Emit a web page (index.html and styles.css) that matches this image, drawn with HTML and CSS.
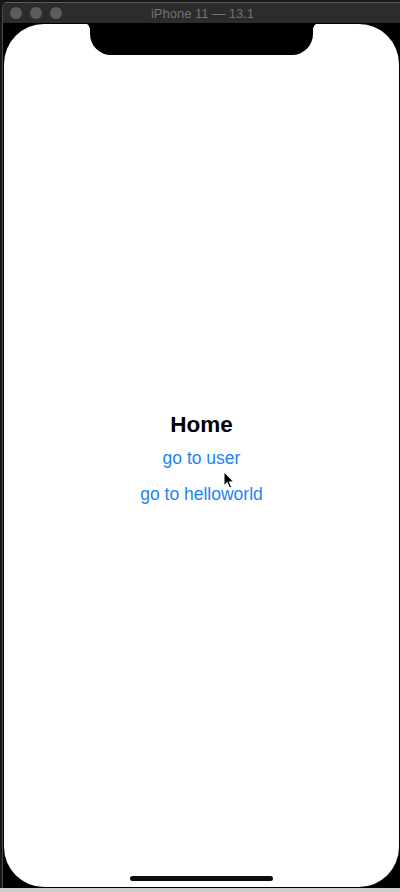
FILE: index.html
```html
<!DOCTYPE html>
<html>
<head>
<meta charset="utf-8">
<link rel="stylesheet" href="styles.css">
</head>
<body>
<div class="frame">
  <div class="window">
    <div class="titlebar">
      <div class="lights">
        <span class="light"></span>
        <span class="light"></span>
        <span class="light"></span>
      </div>
      <div class="title">iPhone 11 — 13.1</div>
    </div>
    <div class="device">
      <div class="screen">
        <div class="notch"></div>
        <div class="content">
          <div class="heading">Home</div>
          <a class="link link-first">go to user</a>
          <a class="link link-second">go to helloworld</a>
        </div>
        <svg class="cursor" width="12" height="18" viewBox="0 0 12 18">
          <path d="M1 1 L1 14.5 L4.2 11.6 L6.6 17 L8.6 16.1 L6.3 10.9 L10.6 10.9 Z" fill="#000" stroke="#fff" stroke-width="1" stroke-linejoin="round"/>
        </svg>
        <div class="home-indicator"></div>
      </div>
    </div>
  </div>
</div>
</body>
</html>
```
FILE: styles.css
```css
html, body {
  margin: 0;
  padding: 0;
}
body {
  width: 400px;
  height: 892px;
  background: #cdcdcd;
  overflow: hidden;
  font-family: "Liberation Sans", Arial, sans-serif;
}
.frame {
  background: #161616;
  padding: 2px 0 0 2px;
  height: 886px;
}
.window {
  border-top: 1px solid #5c5c5c;
  border-left: 1px solid #4a4a4a;
  border-top-left-radius: 5px;
  height: 885px;
  display: flex;
  flex-direction: column;
}
.titlebar {
  height: 20px;
  background: #2c2c2c;
  position: relative;
  display: flex;
  align-items: center;
  justify-content: center;
}
.lights {
  position: absolute;
  left: 7px;
  top: 4px;
  display: flex;
  gap: 8px;
}
.light {
  width: 12px;
  height: 12px;
  border-radius: 50%;
  background: #5c5c5c;
}
.title {
  color: #727272;
  font-size: 13px;
  padding-left: 2px;
  padding-top: 1px;
}
.device {
  flex: 1;
  background: #000;
  padding: 1px 1px 1px 1px;
}
.screen {
  position: relative;
  height: 863px;
  background: #fff;
  border-radius: 40px;
  display: flex;
  flex-direction: column;
  justify-content: center;
  align-items: center;
}
.notch {
  position: absolute;
  left: 86px;
  top: -1px;
  width: 223px;
  height: 32px;
  background: #000;
  border-radius: 0 0 21px 21px;
}
.notch::before,
.notch::after {
  content: "";
  position: absolute;
  top: 0;
  width: 6px;
  height: 6px;
}
.notch::before {
  left: -6px;
  background: radial-gradient(circle at 0 100%, rgba(0,0,0,0) 5.5px, #000 6px);
}
.notch::after {
  right: -6px;
  background: radial-gradient(circle at 100% 100%, rgba(0,0,0,0) 5.5px, #000 6px);
}
.content {
  display: flex;
  flex-direction: column;
  align-items: center;
  padding-top: 4px;
}
.heading {
  font-size: 22.5px;
  font-weight: bold;
  line-height: 28px;
  color: #000;
}
.link {
  font-size: 17.5px;
  line-height: 22px;
  color: #1d84f4;
  text-decoration: none;
}
.link-first {
  margin-top: 8px;
}
.link-second {
  margin-top: 14px;
}
.cursor {
  position: absolute;
  left: 219px;
  top: 447px;
}
.home-indicator {
  position: absolute;
  left: 126px;
  bottom: 6px;
  width: 143px;
  height: 5px;
  border-radius: 3px;
  background: #0d0d0d;
}
```
